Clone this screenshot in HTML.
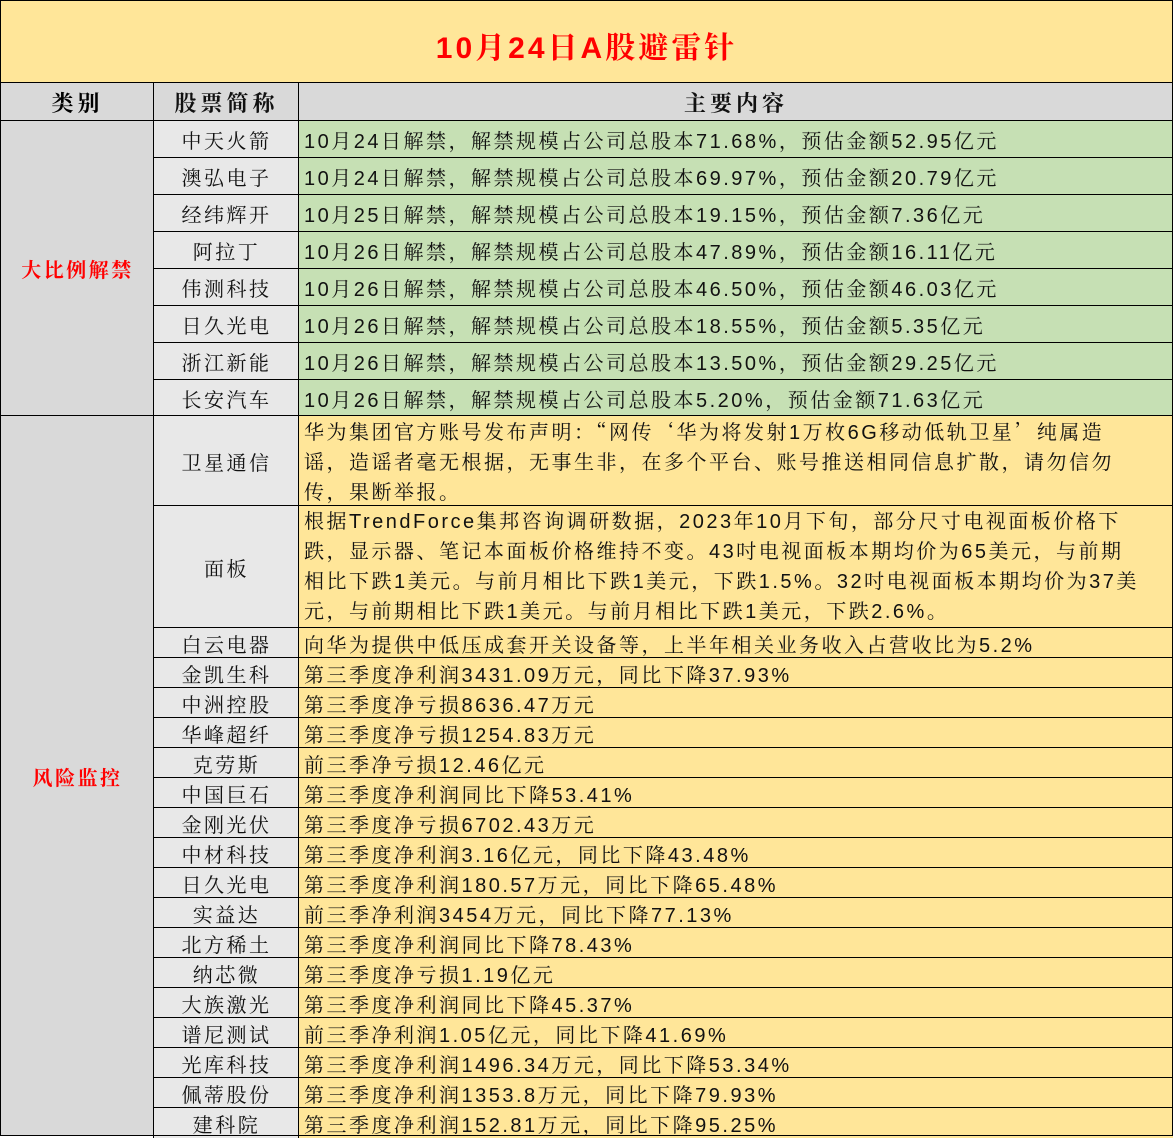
<!DOCTYPE html>
<html><head><meta charset="utf-8"><style>
*{margin:0;padding:0;box-sizing:border-box}
body{width:1173px;height:1136px;background:#fff;font-family:"Liberation Sans","Noto Serif CJK SC",serif;overflow:hidden;position:relative}
.c{position:absolute;border-left:1px solid #000;border-top:1px solid #000;font-size:20px;letter-spacing:2.5px;white-space:nowrap;color:#111}
.cat{left:0;width:154px;background:#d9d9d9;display:flex;align-items:center;justify-content:center;color:#f00;font-weight:bold}
.nm{left:153px;width:146px;background:#e8e8e8;display:flex;align-items:center;justify-content:center}
.ct{left:298px;width:875px;padding-left:5px;display:flex;align-items:center}
.g{background:#c6e0b4}.y{background:#ffe699}
.ml{display:block;line-height:30px}
.q{font-family:"Noto Serif CJK SC",serif}
.frame{position:absolute;left:0;top:0;width:1173px;height:1136px;border:1px solid #000;pointer-events:none}
</style></head><body>
<div class="c" style="left:0;top:0;width:1173px;height:83px;background:#ffe699;display:flex;align-items:center;justify-content:center;color:#f00;font-weight:bold;font-size:30px;letter-spacing:3px;padding-top:6px;border:none">10月24日A股避雷针</div>
<div class="c cat" style="top:82px;height:39px;color:#000;font-size:22px;letter-spacing:4px">类别</div>
<div class="c nm" style="top:82px;height:39px;background:#d9d9d9;font-weight:bold;font-size:22px;letter-spacing:4px">股票简称</div>
<div class="c ct" style="top:82px;height:39px;background:#d9d9d9;justify-content:center;font-weight:bold;font-size:22px;letter-spacing:4px;padding-left:0">主要内容</div>

<div class="c cat" style="top:120px;height:296px">大比例解禁</div>
<div class="c nm" style="top:120px;height:38px">中天火箭</div><div class="c ct g" style="top:120px;height:38px">10月24日解禁，解禁规模占公司总股本71.68%，预估金额52.95亿元</div>
<div class="c nm" style="top:157px;height:38px">澳弘电子</div><div class="c ct g" style="top:157px;height:38px">10月24日解禁，解禁规模占公司总股本69.97%，预估金额20.79亿元</div>
<div class="c nm" style="top:194px;height:38px">经纬辉开</div><div class="c ct g" style="top:194px;height:38px">10月25日解禁，解禁规模占公司总股本19.15%，预估金额7.36亿元</div>
<div class="c nm" style="top:231px;height:38px">阿拉丁</div><div class="c ct g" style="top:231px;height:38px">10月26日解禁，解禁规模占公司总股本47.89%，预估金额16.11亿元</div>
<div class="c nm" style="top:268px;height:38px">伟测科技</div><div class="c ct g" style="top:268px;height:38px">10月26日解禁，解禁规模占公司总股本46.50%，预估金额46.03亿元</div>
<div class="c nm" style="top:305px;height:38px">日久光电</div><div class="c ct g" style="top:305px;height:38px">10月26日解禁，解禁规模占公司总股本18.55%，预估金额5.35亿元</div>
<div class="c nm" style="top:342px;height:38px">浙江新能</div><div class="c ct g" style="top:342px;height:38px">10月26日解禁，解禁规模占公司总股本13.50%，预估金额29.25亿元</div>
<div class="c nm" style="top:379px;height:37px">长安汽车</div><div class="c ct g" style="top:379px;height:37px">10月26日解禁，解禁规模占公司总股本5.20%，预估金额71.63亿元</div>

<div class="c cat" style="top:415px;height:721px">风险监控</div>
<div class="c nm" style="top:415px;height:91px">卫星通信</div>
<div class="c ct y ml" style="top:415px;height:91px">华为集团官方账号发布声明：<span class="q">“</span>网传<span class="q">‘</span>华为将发射1万枚6G移动低轨卫星<span class="q">’</span>纯属造<br>谣，造谣者毫无根据，无事生非，在多个平台、账号推送相同信息扩散，请勿信勿<br>传，果断举报。</div>
<div class="c nm" style="top:505px;height:123px">面板</div>
<div class="c ct y ml" style="top:505px;height:123px;padding-top:1px">根据TrendForce集邦咨询调研数据，2023年10月下旬，部分尺寸电视面板价格下<br>跌，显示器、笔记本面板价格维持不变。43吋电视面板本期均价为65美元，与前期<br>相比下跌1美元。与前月相比下跌1美元，下跌1.5%。32吋电视面板本期均价为37美<br>元，与前期相比下跌1美元。与前月相比下跌1美元，下跌2.6%。</div>

<div class="c nm" style="top:627px;height:31px">白云电器</div><div class="c ct y" style="top:627px;height:31px">向华为提供中低压成套开关设备等，上半年相关业务收入占营收比为5.2%</div>
<div class="c nm" style="top:657px;height:31px">金凯生科</div><div class="c ct y" style="top:657px;height:31px">第三季度净利润3431.09万元，同比下降37.93%</div>
<div class="c nm" style="top:687px;height:31px">中洲控股</div><div class="c ct y" style="top:687px;height:31px">第三季度净亏损8636.47万元</div>
<div class="c nm" style="top:717px;height:31px">华峰超纤</div><div class="c ct y" style="top:717px;height:31px">第三季度净亏损1254.83万元</div>
<div class="c nm" style="top:747px;height:31px">克劳斯</div><div class="c ct y" style="top:747px;height:31px">前三季净亏损12.46亿元</div>
<div class="c nm" style="top:777px;height:31px">中国巨石</div><div class="c ct y" style="top:777px;height:31px">第三季度净利润同比下降53.41%</div>
<div class="c nm" style="top:807px;height:31px">金刚光伏</div><div class="c ct y" style="top:807px;height:31px">第三季度净亏损6702.43万元</div>
<div class="c nm" style="top:837px;height:31px">中材科技</div><div class="c ct y" style="top:837px;height:31px">第三季度净利润3.16亿元，同比下降43.48%</div>
<div class="c nm" style="top:867px;height:31px">日久光电</div><div class="c ct y" style="top:867px;height:31px">第三季度净利润180.57万元，同比下降65.48%</div>
<div class="c nm" style="top:897px;height:31px">实益达</div><div class="c ct y" style="top:897px;height:31px">前三季净利润3454万元，同比下降77.13%</div>
<div class="c nm" style="top:927px;height:31px">北方稀土</div><div class="c ct y" style="top:927px;height:31px">第三季度净利润同比下降78.43%</div>
<div class="c nm" style="top:957px;height:31px">纳芯微</div><div class="c ct y" style="top:957px;height:31px">第三季度净亏损1.19亿元</div>
<div class="c nm" style="top:987px;height:31px">大族激光</div><div class="c ct y" style="top:987px;height:31px">第三季度净利润同比下降45.37%</div>
<div class="c nm" style="top:1017px;height:31px">谱尼测试</div><div class="c ct y" style="top:1017px;height:31px">前三季净利润1.05亿元，同比下降41.69%</div>
<div class="c nm" style="top:1047px;height:31px">光库科技</div><div class="c ct y" style="top:1047px;height:31px">第三季度净利润1496.34万元，同比下降53.34%</div>
<div class="c nm" style="top:1077px;height:31px">佩蒂股份</div><div class="c ct y" style="top:1077px;height:31px">第三季度净利润1353.8万元，同比下降79.93%</div>
<div class="c nm" style="top:1107px;height:31px">建科院</div><div class="c ct y" style="top:1107px;height:31px">第三季度净利润152.81万元，同比下降95.25%</div>
<div class="frame"></div>
</body></html>
